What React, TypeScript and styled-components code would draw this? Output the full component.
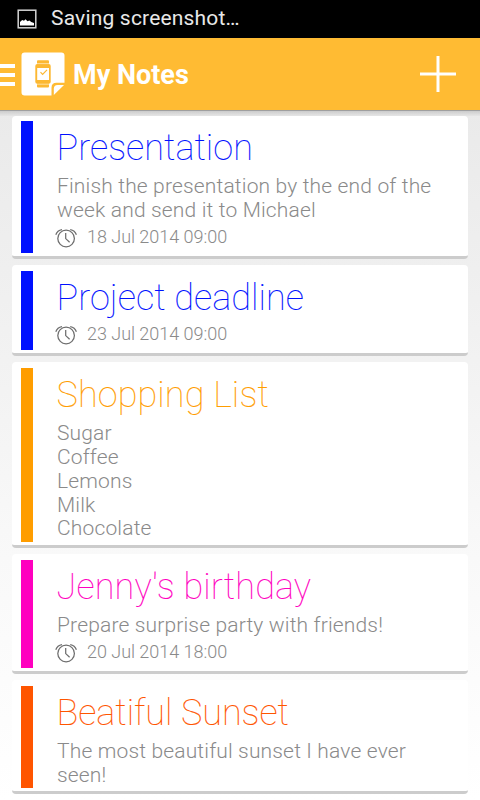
import React from 'react';
import styled, { createGlobalStyle } from 'styled-components';

const GlobalStyle = createGlobalStyle`
  body {
    margin: 0;
    background: #fff;
    font-family: Roboto, sans-serif;
  }
`;

const Screen = styled.div`
  display: flex;
  flex-direction: column;
  width: 480px;
  height: 800px;
  overflow: hidden;
`;

const StatusBar = styled.header`
  display: flex;
  align-items: center;
  flex: 0 0 38px;
  height: 38px;
  gap: 14px;
  padding-left: 17px;
  box-sizing: border-box;
  background: #000;
  color: #e8e8e8;
`;

const StatusText = styled.span`
  font-size: 21px;
  line-height: 36px;
  height: 38px;
  letter-spacing: 0.18px;
`;

const ActionBar = styled.div`
  display: flex;
  align-items: center;
  flex: 0 0 72px;
  height: 72px;
  background: #ffbb33;
  color: #fff;
`;

const MenuIcon = styled.div`
  display: flex;
  flex-direction: column;
  gap: 5px;
  width: 15px;
  margin-right: 6px;
  margin-top: 2px;
`;

const MenuLine = styled.span`
  height: 4px;
  background: #fff;
`;

const AppTitle = styled.h1`
  flex: 1;
  margin: 0 0 0 7px;
  font-size: 27px;
  font-weight: 700;
  line-height: 72px;
  padding-top: 2px;
`;

const AddButton = styled.button`
  display: flex;
  margin: 0 24px 0 0;
  padding: 0;
  border: 0;
  background: none;
`;

const NoteList = styled.main`
  position: relative;
  display: flex;
  flex-direction: column;
  flex: 1;
  gap: 6px;
  padding: 5px 12px 0;
  background: linear-gradient(#eaeaea, #efefef 23%, #f4f4f4 45%, #f9f9f9 65%, #fff);

  &::before {
    content: '';
    position: absolute;
    top: 0;
    left: 0;
    right: 0;
    height: 6px;
    background: linear-gradient(rgba(0, 0, 0, 0.32) 0 1px, rgba(0, 0, 0, 0.13) 1px, rgba(0, 0, 0, 0.02));
  }
`;

const Card = styled.article`
  display: flex;
  gap: 23px;
  padding: 6px 9px 3px;
  border-bottom: 3px solid #ccc;
  border-radius: 4px;
  background: #fff;

  &:first-child {
    margin-top: 1px;
    padding-top: 5px;
  }
`;

const ColorBar = styled.div<{ $color: string }>`
  flex: 0 0 12px;
  background: ${(p) => p.$color};
`;

const CardContent = styled.div`
  flex: 1;
`;

const NoteTitle = styled.h2<{ $color: string; $spacing: number }>`
  margin: 0;
  height: 49px;
  padding-left: 0.6px;
  font-size: 36px;
  font-weight: 100;
  line-height: 55px;
  letter-spacing: ${(p) => p.$spacing}px;
  color: ${(p) => p.$color};
  -webkit-text-stroke: 0.12px ${(p) => p.$color};
`;

const NoteBody = styled.div`
  padding: 4px 0 1px 1px;
  font-size: 21px;
  font-weight: 300;
  line-height: 24px;
  letter-spacing: 0.16px;
  color: #8a8a8a;
  white-space: nowrap;
`;

const BodyLine = styled.div`
  &:nth-child(5) {
    margin: -1px 0 1px;
  }
`;

const Reminder = styled.div`
  display: flex;
  align-items: flex-start;
  height: 30px;
  margin-left: -2px;
`;

const ClockSvg = styled.svg`
  margin-top: 4px;
`;

const ReminderDate = styled.time`
  margin-left: 9px;
  font-size: 18px;
  font-weight: 300;
  line-height: 28px;
  letter-spacing: -0.03px;
  color: #8a8a8a;
`;

const PictureIcon = () => (
  <svg width="20" height="20" viewBox="0 0 20 20">
    <rect x="1.2" y="1.2" width="17.6" height="17.6" fill="none" stroke="#d4d4d4" strokeWidth="1.5" />
    <path d="M3 16.5V13L5.2 11.1L7 11.7L8.5 10.2L10.5 12.3L12.4 11.5L14.2 12.9L17 14.1V16.5Z" fill="#fff" />
  </svg>
);

const AppLogo = () => (
  <svg width="45" height="46" viewBox="0 0 45 46">
    <path d="M3.7 1.4H40.3Q43.5 1.4 43.5 4.6V31.8H35.5Q30.5 31.8 30.5 36.8V44.5H3.7Q.5 44.5 .5 41.3V4.6Q.5 1.4 3.7 1.4Z" fill="#fff" />
    <path d="M32.8 44V37.8Q32.8 34 36.6 34H43Z" fill="#fff" />
    <rect x="16" y="9.3" width="12" height="27.2" rx="1" fill="#fcb832" />
    <rect x="14.3" y="13" width="15.4" height="19.8" rx="2" fill="#fcb832" />
    <path d="M16 12.6H28M16 33.2H28" stroke="#ffdf9d" strokeWidth="1" />
    <rect x="16.2" y="17" width="11.8" height="12" fill="#fff" />
    <path d="M19.5 21.2L21.6 23.3L26 18.9" fill="none" stroke="#fcb832" strokeWidth="1.2" />
  </svg>
);

const PlusIcon = () => (
  <svg width="36" height="36" viewBox="0 0 36 36">
    <path d="M18 0V36M0 18H36" stroke="#fff" strokeWidth="3" />
  </svg>
);

const ClockIcon = () => (
  <ClockSvg width="24" height="22" viewBox="0 0 24 22" fill="none" stroke="#6e6e6e" strokeWidth="1.25">
    <circle cx="12.1" cy="11.5" r="8.3" />
    <path d="M11.7 6V11.6L15.6 15.3" />
    <path d="M1.8 7.8Q3.3 3.4 8 2.6M16.2 2.6Q20.9 3.4 22.4 7.8" />
  </ClockSvg>
);

interface Note {
  title: string;
  color: string;
  spacing: number;
  lines: string[];
  date?: string;
}

const notes: Note[] = [
  {
    title: 'Presentation',
    color: '#0010ff',
    spacing: 0.03,
    lines: ['Finish the presentation by the end of the', 'week and send it to Michael'],
    date: '18 Jul 2014 09:00',
  },
  { title: 'Project deadline', color: '#0010ff', spacing: 0.04, lines: [], date: '23 Jul 2014 09:00' },
  {
    title: 'Shopping List',
    color: '#ff9d00',
    spacing: 0.1,
    lines: ['Sugar', 'Coffee', 'Lemons', 'Milk', 'Chocolate'],
  },
  {
    title: "Jenny's birthday",
    color: '#ff00bf',
    spacing: 0.12,
    lines: ['Prepare surprise party with friends!'],
    date: '20 Jul 2014 18:00',
  },
  {
    title: 'Beatiful Sunset',
    color: '#ff5500',
    spacing: -0.04,
    lines: ['The most beautiful sunset I have ever', 'seen!'],
  },
];

const NoteCard = ({ note }: { note: Note }) => (
  <Card>
    <ColorBar $color={note.color} />
    <CardContent>
      <NoteTitle $color={note.color} $spacing={note.spacing}>
        {note.title}
      </NoteTitle>
      {note.lines.length > 0 && (
        <NoteBody>
          {note.lines.map((line) => (
            <BodyLine key={line}>{line}</BodyLine>
          ))}
        </NoteBody>
      )}
      {note.date && (
        <Reminder>
          <ClockIcon />
          <ReminderDate>{note.date}</ReminderDate>
        </Reminder>
      )}
    </CardContent>
  </Card>
);

export default function App() {
  return (
    <>
      <GlobalStyle />
      <Screen>
        <StatusBar>
          <PictureIcon />
          <StatusText>Saving screenshot…</StatusText>
        </StatusBar>
        <ActionBar>
          <MenuIcon>
            <MenuLine />
            <MenuLine />
            <MenuLine />
          </MenuIcon>
          <AppLogo />
          <AppTitle>My Notes</AppTitle>
          <AddButton aria-label="Add note">
            <PlusIcon />
          </AddButton>
        </ActionBar>
        <NoteList>
          {notes.map((note) => (
            <NoteCard key={note.title} note={note} />
          ))}
        </NoteList>
      </Screen>
    </>
  );
}
